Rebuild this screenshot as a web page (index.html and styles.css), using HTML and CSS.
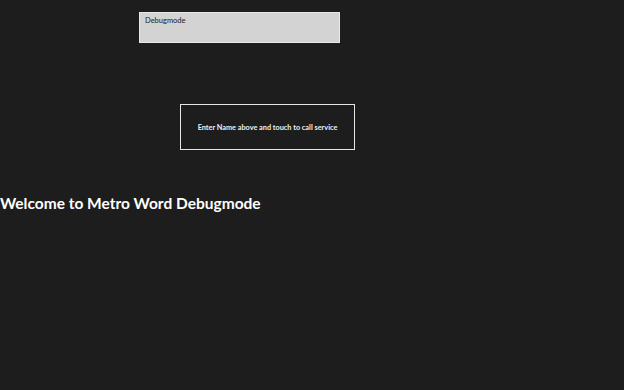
FILE: index.html
```html
<!DOCTYPE html>
<html>
<head>
<meta charset="utf-8">
<link rel="stylesheet" href="styles.css">
</head>
<body>
<div class="page">
  <div class="input-row">
    <div class="textbox">Debugmode</div>
  </div>
  <div class="button-row">
    <div class="button">Enter Name above and touch to call service</div>
  </div>
  <h1 class="title">Welcome to Metro Word Debugmode</h1>
</div>
</body>
</html>
```
FILE: styles.css
```css
html, body {
  margin: 0;
  padding: 0;
  background: #1d1d1d;
  width: 624px;
  height: 390px;
  overflow: hidden;
  font-family: Lato, "Open Sans", sans-serif;
}
.page {
  display: flex;
  flex-direction: column;
}
.input-row {
  padding: 12px 0 0 139px;
}
.textbox {
  box-sizing: border-box;
  width: 201px;
  height: 31px;
  background: #d3d3d3;
  border: 1px solid #e8e8e8;
  color: #222;
  font-size: 7.5px;
  padding: 2px 5px;
  line-height: 11px;
}
.button-row {
  padding: 61px 0 0 180px;
}
.button {
  box-sizing: border-box;
  width: 175px;
  height: 46px;
  border: 1.5px solid #e6e6e6;
  color: #f0f0f0;
  font-size: 7.3px;
  font-weight: 700;
  display: flex;
  align-items: center;
  justify-content: center;
}
.title {
  margin: 43px 0 0 0;
  color: #ffffff;
  font-size: 15.5px;
  font-weight: 700;
  line-height: 20px;
}
```
